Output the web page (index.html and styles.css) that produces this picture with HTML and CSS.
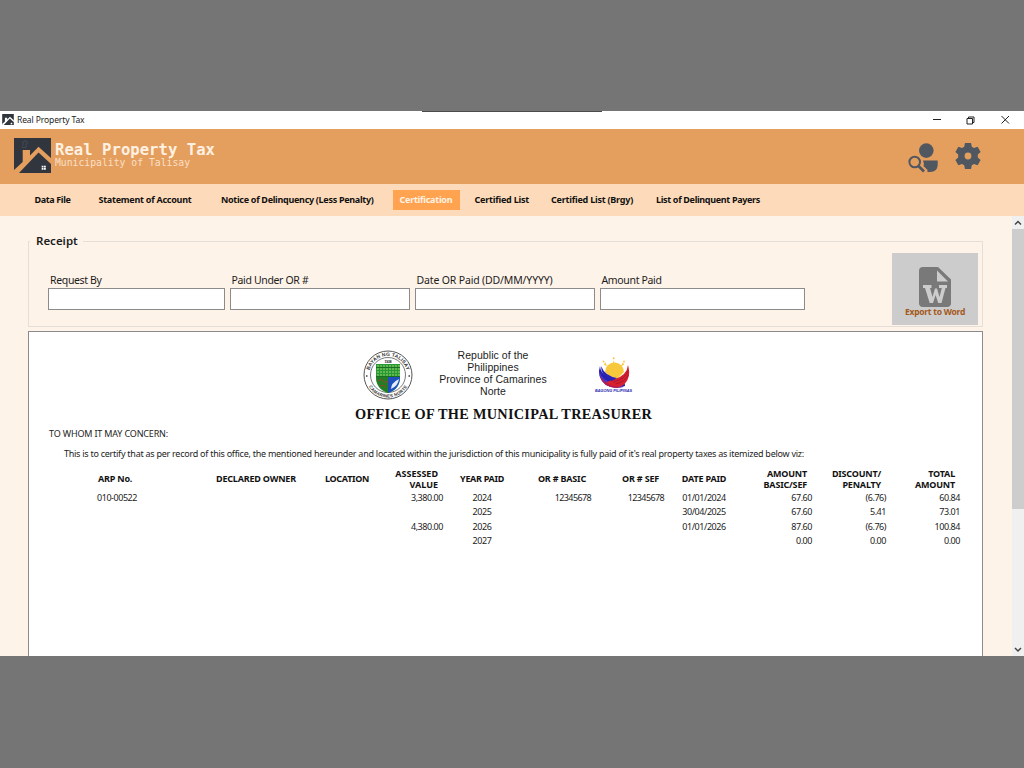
FILE: index.html
```html
<!DOCTYPE html>
<html lang="en">
<head>
<meta charset="utf-8">
<title>Real Property Tax</title>
<link rel="stylesheet" href="styles.css">
</head>
<body>
<div class="window">
  <div class="titlebar">
    <svg class="app-icon" viewBox="0 0 37 35"><rect width="37" height="35" fill="#30353e"/><path d="M0 35v-3l8.700-8V12H16v5.500l8.500-8.800L37 20v6L24.500 14.500 5 35z" fill="#fff"/><path d="M27 28h5v5h-5z" fill="#fff"/></svg>
    <span class="app-name">Real Property Tax</span>
    <svg class="win-controls" viewBox="0 0 80 14" fill="none" stroke="#222" stroke-width="1"><path d="M1 6.500h8M35 5.500h5.500v5.500H35zM36.500 5.500v-1.500h5.500v5.500h-1.500M69.500 3l7.500 7.500M77 3l-7.500 7.500"/></svg>
  </div>
  <header class="banner">
    <svg class="logo" viewBox="0 0 37 35"><rect width="37" height="35" fill="#30353e"/><path d="M0 35v-3l8.700-8V12H16v5.500l8.500-8.800L37 20v6L24.500 14.500 5 35z" fill="#e49f5e"/><path d="M27.700 27.700h1.800v1.800h-1.800zM30 27.700h1.800v1.800H30zM27.700 30h1.800v1.800h-1.800zM30 30h1.800v1.800H30z" fill="#fff"/><path d="M9 10c-2-2 1-3 0-5s3-3 4-1-2 2-1 4-2 1-3 2" fill="none" stroke="#505761" stroke-width=".7"/></svg>
    <div class="brand">
      <div class="brand-title">Real Property Tax</div>
      <div class="brand-sub">Municipality of Talisay</div>
    </div>
    <svg class="user-icon" viewBox="0 0 30 30"><g fill="#505761"><circle cx="18.300" cy="7.600" r="7.300"/><path d="M15 17.500h14.700V22Q29.500 29 22 29h-2.500v-2l-4-4q1-2-.5-5.500z"/></g><circle cx="6.700" cy="19" r="5.300" fill="none" stroke="#505761" stroke-width="2"/><path d="M10.500 23l5.500 5.500" stroke="#505761" stroke-width="2.600"/></svg>
    <svg class="gear-icon" viewBox="0 0 26 26"><path fill="#505761" fill-rule="evenodd" d="M10 0h6l.8 3.700 2.200 1.200 3.600-1.200 3 5.200L22.800 11.500v3l2.800 2.600-3 5.200-3.600-1.200-2.200 1.200L16 26h-6l-.8-3.700L7 21.100l-3.600 1.200-3-5.200 2.800-2.600v-3L.4 8.900l3-5.200L7 4.900l2.200-1.200zM13 9.600a3.400 3.400 0 1 0 0 6.800 3.400 3.400 0 0 0 0-6.800z"/></svg>
  </header>
  <nav class="menu">
    <a class="m1">Data File</a>
    <a class="m2">Statement of Account</a>
    <a class="m3">Notice of Delinquency (Less Penalty)</a>
    <a class="m4 active">Certification</a>
    <a class="m5">Certified List</a>
    <a class="m6">Certified List (Brgy)</a>
    <a class="m7">List of Delinquent Payers</a>
  </nav>
  <div class="body">
    <main class="content">
      <fieldset class="receipt">
        <legend>Receipt</legend>
        <div class="fields">
          <label class="field f1"><span>Request By</span><input type="text"></label>
          <label class="field f2"><span>Paid Under OR #</span><input type="text"></label>
          <label class="field f3"><span>Date OR Paid (DD/MM/YYYY)</span><input type="text"></label>
          <label class="field f4"><span>Amount Paid</span><input type="text"></label>
        </div>
        <button class="export">
          <svg class="word-icon" viewBox="0 0 32 40"><path d="M4 0h15l13 12.500V36q0 4-4 4H4q-4 0-4-4V4q0-4 4-4z" fill="#797979"/><path d="M18 3.500v11h11z" fill="#ccc"/><path d="M4 18h8.500v3H11l2.500 9 2.500-8.500h2l2.500 8.500 2.300-9H20v-3h8v3h-1.500L22.500 36h-3.300L16.600 28 14 36h-3.300L6 21H4z" fill="#ccc"/></svg>
          <span>Export to Word</span>
        </button>
      </fieldset>
      <section class="paper">
        <div class="letterhead">
          <svg class="seal" viewBox="0 0 50 50"><circle cx="25" cy="25" r="24" fill="#fff" stroke="#555" stroke-width="1"/><circle cx="25" cy="25" r="17.500" fill="none" stroke="#555" stroke-width=".8"/><defs><path id="arcTop" d="M6 25a19 19 0 0 1 38 0"/><path id="arcBottom" d="M2.500 25a22.500 22.500 0 0 0 45 0"/></defs><text class="seal-text"><textPath href="#arcTop" startOffset="50%" text-anchor="middle" textLength="50">BAYAN NG TALISAY</textPath></text><text class="seal-text small"><textPath href="#arcBottom" startOffset="50%" text-anchor="middle" textLength="46">CAMARINES NORTE</textPath></text><text class="seal-year" x="25" y="12.500" text-anchor="middle">1938</text><path d="M13 14h24v13q0 12-12 16Q13 39 13 27z" fill="#269a35"/><path d="M25 27h12q0 12-12 16z" fill="#1e4fbd"/><path d="M13 27h12v16Q13 38 13 27z" fill="#247d25"/><path d="M15 15v11M18 15v11M21 15v11M24 15v11M27 15v11M30 15v11M33 15v11M36 15v11" stroke="#a6d26a" stroke-width="1" stroke-dasharray="2 1"/><path d="M13 17.500h24M13 26.500h24" stroke="#14661d" stroke-width=".8"/><path d="M28 39q0-6 8-10-1 7-8 10z" fill="#e5edfa"/><path d="M15 31q3-3 5 0t5 0M17 36q3-2 6 1" stroke="#94462a" fill="none"/><circle cx="3.800" cy="26" r=".8"/><circle cx="46.200" cy="26" r=".8"/></svg>
          <div class="republic">
            <div>Republic of the</div>
            <div>Philippines</div>
            <div>Province of Camarines</div>
            <div>Norte</div>
          </div>
          <svg class="bagong" viewBox="0 0 38 36"><path d="M10 15a9.500 9.500 0 0 1 19 0l-9 9z" fill="#f8c83c"/><path d="M18.500 3l1 5h-2zM10 5l2 4-3-1zM28 5l-2 4 3-1z" fill="#f8c83c"/><g fill="#f8c83c"><circle cx="18.700" cy="1.300" r="1"/><circle cx="8.500" cy="4.500" r=".9"/><circle cx="29" cy="4.500" r=".9"/></g><path d="M5 9q1 11 15 13Q31 24 30 29 20 33 11 28 1 20 5 9z" fill="#2522ad"/><path d="M4.500 15q3 9 15 11 8 1 9 4-10 2-18-3-6-5-6-12z" fill="#4b35c8"/><path d="M33 8q-1 10-13 14-8 2-10 5 9 6 17 2Q37 22 33 8z" fill="#d8202e"/><path d="M5 19q7 11 20 11-7 2-14-2-5-4-6-9z" fill="#b51b50"/><path d="M6 9q4 10 16 12l-5 3Q6 20 6 9z" fill="#2b23b5"/><path d="M33.500 13q-3 9-15 12M33.500 18q-4 7-13 9" stroke="#8f1230" stroke-width=".7" fill="none"/><text class="bagong-text" x="0" y="35.300" textLength="37" lengthAdjust="spacingAndGlyphs">BAGONG PILIPINAS</text></svg>
        </div>
        <h1 class="office">OFFICE OF THE MUNICIPAL TREASURER</h1>
        <p class="salute">TO WHOM IT MAY CONCERN:</p>
        <p class="statement">This is to certify that as per record of this office, the mentioned hereunder and located within the jurisdiction of this municipality is fully paid of it's real property taxes as itemized below viz:</p>
        <table class="ledger">
          <colgroup><col class="c-arp"><col class="c-owner"><col class="c-loc"><col class="c-assessed"><col class="c-year"><col class="c-basic"><col class="c-sef"><col class="c-date"><col class="c-amount"><col class="c-disc"><col class="c-total"></colgroup>
          <thead><tr><th class="indent">ARP No.</th><th>DECLARED OWNER</th><th class="tight">LOCATION</th><th class="num wide">ASSESSED<br>VALUE</th><th class="mid tight">YEAR PAID</th><th class="num">OR # BASIC</th><th class="num">OR # SEF</th><th class="mid">DATE PAID</th><th class="num">AMOUNT<br>BASIC/SEF</th><th class="num">DISCOUNT/<br>PENALTY</th><th class="num">TOTAL<br>AMOUNT</th></tr></thead>
          <tbody>
            <tr><td>010-00522</td><td></td><td></td><td class="num">3,380.00</td><td class="mid">2024</td><td class="num tight">12345678</td><td class="num tight">12345678</td><td class="mid">01/01/2024</td><td class="num">67.60</td><td class="num">(6.76)</td><td class="num">60.84</td></tr>
            <tr><td></td><td></td><td></td><td></td><td class="mid">2025</td><td></td><td></td><td class="mid">30/04/2025</td><td class="num">67.60</td><td class="num">5.41</td><td class="num">73.01</td></tr>
            <tr><td></td><td></td><td></td><td class="num">4,380.00</td><td class="mid">2026</td><td></td><td></td><td class="mid">01/01/2026</td><td class="num">87.60</td><td class="num">(6.76)</td><td class="num">100.84</td></tr>
            <tr><td></td><td></td><td></td><td></td><td class="mid">2027</td><td></td><td></td><td></td><td class="num">0.00</td><td class="num">0.00</td><td class="num">0.00</td></tr>
          </tbody>
        </table>
      </section>
    </main>
    <div class="scrollbar">
      <svg class="arrow" viewBox="0 0 12 12"><path d="M3 8l3-3 3 3" fill="none" stroke="#444" stroke-width="1.500"/></svg>
      <div class="thumb"></div>
      <svg class="arrow" viewBox="0 0 12 12"><path d="M3 4.500l3 3 3-3" fill="none" stroke="#444" stroke-width="1.500"/></svg>
    </div>
  </div>
</div>
</body>
</html>
```
FILE: styles.css
```css
* { box-sizing: border-box; }
body { margin: 0; width: 1024px; height: 768px; overflow: hidden; background: #757575; padding-top: 111px; font-family: "Noto Sans", sans-serif; color: #1c1c1c; }
.window { height: 545px; display: flex; flex-direction: column; background: #fff; }
.titlebar { height: 18px; flex: none; display: flex; align-items: center; background: linear-gradient(#4b4b4b, #4b4b4b) 422px 0 / 180px 1px no-repeat #fff; padding: 0 12px 1px 2px; }
.app-icon { width: 12px; height: 11px; margin-right: 3px; }
.app-name { font-size: 8.5px; line-height: 17px; letter-spacing: -0.108px; }
.win-controls { width: 80px; height: 14px; margin-left: auto; }
.banner { height: 55px; flex: none; display: flex; background: #e49f5e; padding: 9px 43px 0 14px; }
.logo { width: 37px; height: 35px; }
.brand { flex: 1; padding-left: 4px; font-family: "DejaVu Sans Mono", monospace; }
.brand-title { font-size: 15.6px; line-height: 17px; font-weight: 700; color: #fff1e2; padding-top: 4px; letter-spacing: 0.023px; }
.brand-sub { font-size: 9.75px; line-height: 8px; color: #fbdfc6; }
.user-icon { width: 30px; height: 30px; margin: 5px 17px 0 0; }
.gear-icon { width: 26px; height: 26px; margin-top: 5px; }
.menu { height: 32px; flex: none; display: flex; align-items: center; background: #fddbba; padding: 0 0 1px 34.5px; font-size: 9px; font-weight: 700; line-height: 20px; white-space: nowrap; color: #111; letter-spacing: -0.25px; }
.m1 { width: 64px; letter-spacing: -0.368px; }
.m2 { width: 122.5px; }
.m3 { width: 171.5px; letter-spacing: -0.298px; }
.m4 { width: 67px; height: 20px; padding-left: 7px; margin-right: 15px; }
.m5 { width: 76.5px; letter-spacing: -0.213px; }
.m6 { width: 105px; letter-spacing: -0.222px; }
.m7 { letter-spacing: -0.327px; }
.active { background: #ffa351; color: #fff3e4; }
.body { flex: 1; min-height: 0; display: flex; background: #fef3e9; }
.content { flex: 1; min-width: 0; padding: 17px 29px 0 28px; display: flex; flex-direction: column; }
.receipt { margin: 0; border: 1px solid #e6dfd8; height: 94px; flex: none; display: flex; padding: 0 4px 0 19px; min-width: 0; }
.receipt legend { font-size: 11.5px; line-height: 16px; font-weight: 600; padding: 0 5px 0 6px; margin-left: -18px; height: 16px; }
.fields { display: flex; flex: 1; padding-top: 24px; }
.field { display: flex; flex-direction: column; font-size: 10.5px; line-height: 14px; margin-right: 4.5px; white-space: nowrap; letter-spacing: -0.345px; }
.field span { margin-left: 2px; align-self: flex-start; }
.field input { height: 22px; border: 1px solid #8b8b8b; background: #fff; padding: 0; width: 100%; margin: 1px 0 0; }
.f1 { width: 177px; }
.f2, .f3 { width: 180.5px; }
.f3 { letter-spacing: -0.155px; }
.f4 { width: 205px; }
.export { width: 86px; height: 72px; border: 0; background: #ccc; padding: 14px 0 0; margin-top: 4px; display: flex; flex-direction: column; align-items: center; font: 700 8.5px/10px "Noto Sans", sans-serif; color: #a4581b; white-space: nowrap; letter-spacing: -0.26px; }
.word-icon { width: 32px; height: 40px; display: block; }
.paper { margin-top: 4px; flex: 1; border: 1px solid #8b8b8b; border-bottom: 0; background: #fff; min-height: 0; overflow: hidden; width: 955px; }
.letterhead { display: flex; padding: 18px 0 0 334px; height: 72px; }
.seal { width: 50px; height: 50px; }
.seal-text { font: 700 5px "Liberation Sans", sans-serif; fill: #333; }
.seal-text.small { font-size: 4.4px; }
.seal-year { font: 700 3.2px "Liberation Sans", sans-serif; }
.republic { width: 160px; text-align: center; font: 10.5px/12px "Liberation Sans", sans-serif; margin: -1px 22px 0 0; letter-spacing: 0.06px; }
.bagong { width: 38px; height: 36px; margin-top: 7px; }
.bagong-text { font: italic 700 4px "Liberation Sans", sans-serif; fill: #2522ad; }
.office { margin: 0; padding-left: 326px; font: 700 14.3px/20px "Liberation Serif", serif; letter-spacing: 0.28px; color: #111; white-space: nowrap; }
.salute { margin: 4px 0 0 20px; font-size: 9px; line-height: 12px; white-space: nowrap; letter-spacing: -0.169px; }
.statement { margin: 8px 0 0 35px; font-size: 9px; line-height: 12px; white-space: nowrap; letter-spacing: -0.258px; }
.ledger { table-layout: fixed; border-collapse: collapse; width: 863px; margin: 7px 0 0 68px; font-size: 9px; white-space: nowrap; }
.ledger th { padding: 0; height: 24px; line-height: 11.5px; text-align: left; font-weight: 700; font-size: 9px; color: #111; letter-spacing: -0.19px; }
.ledger td { padding: 0; height: 14.3px; line-height: 14.3px; letter-spacing: -0.46px; }
.ledger td.tight { letter-spacing: -0.62px; }
.ledger th.tight { letter-spacing: -0.3px; }
.ledger th.wide { letter-spacing: 0; }
.ledger .indent { padding-left: 1px; }
.ledger .num { text-align: right; }
.ledger th.num { padding-right: 5px; }
.ledger .mid { text-align: center; }
.c-arp { width: 119px; }
.c-owner { width: 109px; }
.c-loc { width: 55px; }
.c-assessed { width: 63px; }
.c-year { width: 78px; }
.c-basic { width: 70px; }
.c-sef { width: 73px; }
.c-date { width: 80px; }
.c-amount { width: 68px; }
.c-disc, .c-total { width: 74px; }
.scrollbar { width: 12px; flex: none; background: #f0f0f0; display: flex; flex-direction: column; }
.arrow { width: 12px; height: 13px; }
.thumb { height: 280px; background: #cdcdcd; margin-bottom: auto; }
```
